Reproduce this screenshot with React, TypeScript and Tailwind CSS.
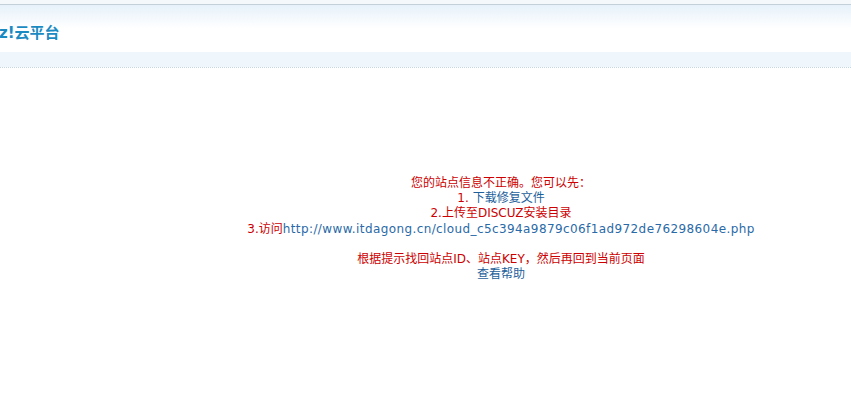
export default function App() {
  return (
    <div className="min-h-[413px] w-[851px] overflow-hidden bg-white font-['DejaVu_Sans','Noto_Sans_CJK_SC',sans-serif] text-[12px]">
      {/* top bar */}
      <div className="h-[4px] bg-[#f4f8fb]" />
      <div className="h-[1px] bg-[#c3d0d9]" />
      <div className="h-[47px] bg-gradient-to-b from-[#e6f1fa] via-white to-white">
        <div className="flex h-full items-center pt-[9px]">
          <h1 className="-ml-[1px] text-[15px] font-bold leading-none text-[#1a8ac2]">z!云平台</h1>
        </div>
      </div>
      <div className="h-[15px] bg-[#f0f7fc]" />
      <div className="border-t border-dotted border-[#c5d5e2]" />

      {/* message */}
      <div className="w-[1002px] pt-[108px] text-center leading-[15.2px] text-[#cc0000]">
        <p>您的站点信息不正确。您可以先：</p>
        <p>
          1. <a className="text-[#1e5f9b]">下载修复文件</a>
        </p>
        <p>2.上传至DISCUZ安装目录</p>
        <p>
          3.访问<a className="tracking-[0.4px] text-[#2a6aa8]">http://www.itdagong.cn/cloud_c5c394a9879c06f1ad972de76298604e.php</a>
        </p>
        <p>&nbsp;</p>
        <p>根据提示找回站点ID、站点KEY，然后再回到当前页面</p>
        <p>
          <a className="text-[#1e5f9b]">查看帮助</a>
        </p>
      </div>
    </div>
  );
}
